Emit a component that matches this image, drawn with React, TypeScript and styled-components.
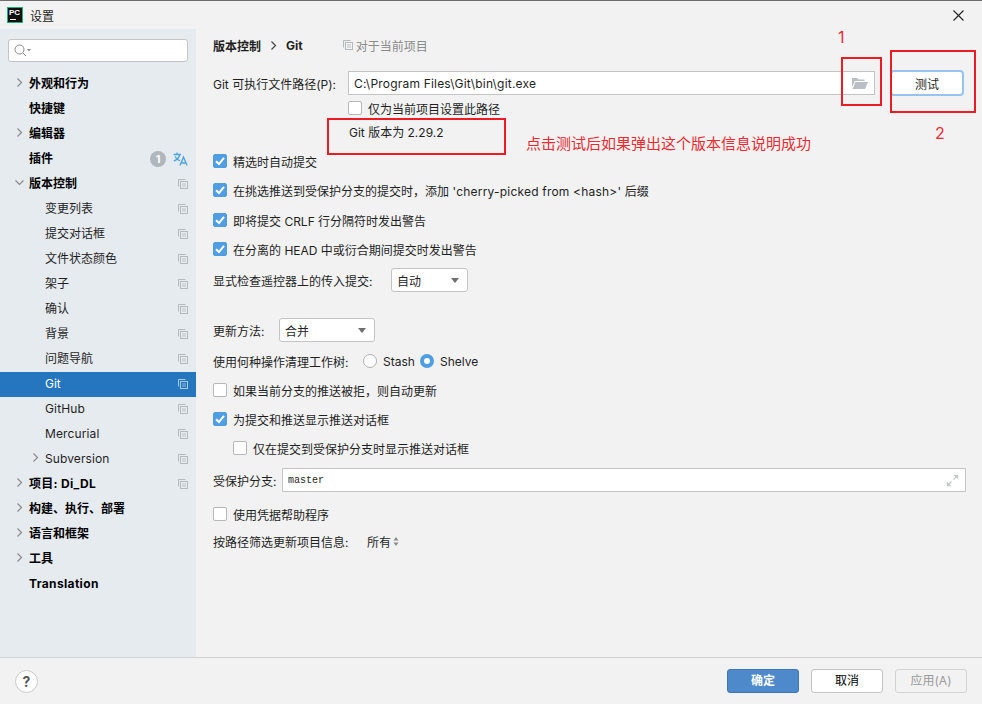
import React from "react";
import styled, { createGlobalStyle } from "styled-components";

const FONT = `Inter, "Noto Sans CJK SC", sans-serif`;

const Global = createGlobalStyle`
  html, body { margin: 0; padding: 0; background: #f2f2f2; }
  body { font-family: ${FONT}; font-size: 12px; color: #1f1f1f; }
  * { box-sizing: border-box; }
`;

const Dialog = styled.div`
  position: relative;
  width: 982px;
  height: 704px;
  overflow: hidden;
  background: #f2f2f2;
  border-top: 1px solid #6e6e6e;
  display: flex;
  flex-direction: column;
`;
const TitleBar = styled.div`
  height: 28px;
  flex: none;
  display: flex;
  align-items: center;
  padding: 0 18px 0 7px;
  gap: 7px;
  background: #f2f2f2;
`;
const Logo = styled.div`
  width: 16px;
  height: 16px;
  background: #111;
  border: 1px solid #1fb37a;
  color: #fff;
  font: bold 8px/9px "Liberation Sans", sans-serif;
  padding-left: 1px;
  position: relative;
  &::after {
    content: "";
    position: absolute;
    left: 2px;
    bottom: 2px;
    width: 6px;
    height: 1px;
    background: #fff;
  }
`;
const TitleText = styled.span`
  font-size: 12px;
  flex: 1;
`;
const Main = styled.div`
  flex: 1;
  display: flex;
  min-height: 0;
`;
const Sidebar = styled.div`
  width: 196px;
  flex: none;
  background: #e6ebf0;
  padding-top: 10px;
`;
const SearchBox = styled.div`
  margin: 0 8px 10px;
  width: 180px;
  height: 23px;
  border: 1px solid #c4c4c4;
  border-radius: 3px;
  background: #fff;
  display: flex;
  align-items: center;
  padding-left: 5px;
`;
const TreeRow = styled.div<{ $level: number; $selected?: boolean; $bold?: boolean }>`
  height: 25px;
  display: flex;
  align-items: center;
  padding-left: ${(p) => (p.$level === 0 ? 29 : 45)}px;
  padding-right: 8px;
  position: relative;
  font-weight: ${(p) => (p.$bold ? 700 : 400)};
  background: ${(p) => (p.$selected ? "#2675bf" : "transparent")};
  color: ${(p) => (p.$selected ? "#fff" : p.$bold ? "#000" : "#1f1f1f")};
`;
const TreeLabel = styled.span<{ $latin?: boolean; $spacing?: number }>`
  flex: 1;
  white-space: nowrap;
  margin-top: ${(p) => (p.$latin ? -2 : -4)}px;
  letter-spacing: ${(p) => p.$spacing ?? 0}px;
`;
const Arrow = styled.span<{ $level: number }>`
  position: absolute;
  left: ${(p) => (p.$level === 0 ? 14 : 30)}px;
  top: 5px;
  width: 11px;
  height: 11px;
  display: flex;
`;
const Badge = styled.span`
  width: 16px;
  height: 16px;
  border-radius: 50%;
  background: #afb6bc;
  color: #fff;
  font-size: 11px;
  font-weight: 700;
  line-height: 16px;
  text-align: center;
  margin: -2px 7px 0 0;
`;
const IconSlot = styled.span`
  display: flex;
  margin-top: -2px;
`;
const Content = styled.div`
  flex: 1;
  min-width: 0;
  padding: 7px 16px 0 17px;
  display: flex;
  flex-direction: column;
`;
const Row = styled.div<{ $h: number; $mt?: number; $indent?: number }>`
  height: ${(p) => p.$h}px;
  margin-top: ${(p) => p.$mt ?? 0}px;
  margin-left: ${(p) => p.$indent ?? 0}px;
  display: flex;
  align-items: center;
  white-space: nowrap;
  flex: none;
`;
const Crumb = styled.span`
  font-weight: 700;
  font-size: 12px;
  color: #1f1f1f;
`;
const CrumbSep = styled.span`
  margin: 0 7px;
  display: flex;
`;
const ProjectNote = styled.span`
  color: #8a8a8a;
  font-size: 12px;
  margin-left: 40px;
  display: flex;
  align-items: center;
  gap: 3px;
`;
const Label = styled.span<{ $w?: number }>`
  ${(p) => (p.$w ? `width: ${p.$w}px; flex: none;` : "")}
`;
const Latin = styled.span`
  letter-spacing: 0.2px;
`;
const TextField = styled.div<{ $w: number; $mono?: boolean }>`
  width: ${(p) => p.$w}px;
  height: 24px;
  flex: none;
  border: 1px solid #c4c4c4;
  background: #fff;
  display: flex;
  align-items: center;
  justify-content: space-between;
  padding: 0 6px 0 5px;
  font-family: ${(p) => (p.$mono ? `"Liberation Mono", monospace` : FONT)};
  font-size: ${(p) => (p.$mono ? "10px" : "12px")};
`;
const TestButton = styled.div`
  width: 74px;
  height: 26px;
  flex: none;
  margin-left: 15px;
  border: 2px solid #97c3ef;
  border-radius: 4px;
  background: #fff;
  display: flex;
  align-items: center;
  justify-content: center;
  font-size: 12px;
`;
const Box = styled.span<{ $checked?: boolean }>`
  width: 14px;
  height: 14px;
  flex: none;
  border-radius: 2px;
  border: 1px solid ${(p) => (p.$checked ? "#4f9ee3" : "#b8b8b8")};
  background: ${(p) => (p.$checked ? "#4f9ee3" : "#fff")};
  display: flex;
  align-items: center;
  justify-content: center;
  margin-right: 6px;
`;
const Select = styled.div<{ $w: number }>`
  width: ${(p) => p.$w}px;
  height: 24px;
  flex: none;
  border: 1px solid #c4c4c4;
  border-radius: 3px;
  background: #fff;
  display: flex;
  align-items: center;
  justify-content: space-between;
  padding: 0 8px 0 5px;
  &::after {
    content: "";
    border-left: 4px solid transparent;
    border-right: 4px solid transparent;
    border-top: 5px solid #6e6e6e;
  }
`;
const Radio = styled.span<{ $on?: boolean }>`
  width: 14px;
  height: 14px;
  flex: none;
  border-radius: 50%;
  background: #fff;
  border: ${(p) => (p.$on ? "4.5px solid #4f9ee3" : "1px solid #b0b0b0")};
  margin-right: 6px;
`;
const Footer = styled.div`
  height: 47px;
  flex: none;
  border-top: 1px solid #d1d1d1;
  display: flex;
  align-items: center;
  padding: 0 15px;
`;
const Help = styled.div`
  width: 23px;
  height: 23px;
  border-radius: 50%;
  border: 1px solid #c9c9c9;
  background: #fff;
  color: #555;
  font-weight: 700;
  font-size: 14px;
  display: flex;
  align-items: center;
  justify-content: center;
`;
const FootButtons = styled.div`
  margin-left: auto;
  display: flex;
  gap: 12px;
`;
const FootButton = styled.div<{ $kind: "primary" | "normal" | "disabled" }>`
  width: 72px;
  height: 24px;
  border-radius: 3px;
  display: flex;
  align-items: center;
  justify-content: center;
  font-size: 12px;
  line-height: 20px;
  padding-bottom: 1px;
  border: 1px solid ${(p) => (p.$kind === "primary" ? "#3f78b8" : p.$kind === "normal" ? "#c4c4c4" : "#d2d2d2")};
  background: ${(p) => (p.$kind === "primary" ? "#4e8acb" : p.$kind === "normal" ? "#fff" : "#f2f2f2")};
  color: ${(p) => (p.$kind === "primary" ? "#fff" : p.$kind === "normal" ? "#000" : "#9a9a9a")};
  font-weight: ${(p) => (p.$kind === "primary" ? 700 : 400)};
`;
const RedRect = styled.div<{ $l: number; $t: number; $w: number; $h: number }>`
  position: absolute;
  left: ${(p) => p.$l}px;
  top: ${(p) => p.$t}px;
  width: ${(p) => p.$w}px;
  height: ${(p) => p.$h}px;
  border: 2px solid #ed1c24;
`;
const RedText = styled.div<{ $l: number; $t: number; $size: number }>`
  position: absolute;
  left: ${(p) => p.$l}px;
  top: ${(p) => p.$t}px;
  font-size: ${(p) => p.$size}px;
  line-height: 20px;
  color: #ed2a32;
  white-space: nowrap;
`;

const Chevron = ({ down, color = "#8c8c8c" }: { down?: boolean; color?: string }) => (
  <svg width="11" height="11" viewBox="0 0 11 11" fill="none" stroke={color} strokeWidth="1.2">
    {down ? <path d="M1.5 3.5 L5.5 7.5 L9.5 3.5" /> : <path d="M3.5 1.5 L7.5 5.5 L3.5 9.5" />}
  </svg>
);
const CopyIcon = ({ color = "#b4b9bd" }: { color?: string }) => (
  <svg width="10" height="10" viewBox="0 0 10 10" fill="none" stroke={color} strokeWidth="1">
    <path d="M0.5 7.5 V0.5 H7.5" />
    <rect x="2.5" y="2.5" width="7" height="7" />
    <path d="M4 5 H8 M4 7 H8" strokeWidth="0.8" />
  </svg>
);
const Check = () => (
  <svg width="12" height="12" viewBox="0 0 12 12" fill="none" stroke="#fff" strokeWidth="2">
    <path d="M2 6.2 L5 9 L10 2.8" />
  </svg>
);
const SearchIcon = () => (
  <svg width="18" height="13" viewBox="0 0 18 13" fill="none" stroke="#8a8a8a" strokeWidth="1">
    <circle cx="5.5" cy="5.5" r="4.5" />
    <path d="M9 9 L12 12" />
    <path d="M13 5 H17 L15 7.5 Z" fill="#8a8a8a" stroke="none" />
  </svg>
);
const TranslateIcon = () => (
  <svg width="15" height="14" viewBox="0 0 15 14" fill="none" stroke="#4ea6dc" strokeWidth="1.4">
    <path d="M0.5 2.5 H8 M4 0.5 V2.5 M6.8 2.5 C6 6 3.5 8 0.8 9 M2 4.5 C3 6.5 5 8 7 8.6" />
    <path d="M7 13.5 L10.5 5 L14 13.5 M8.2 11 H12.8" />
  </svg>
);
const FolderIcon = () => (
  <svg width="16" height="12" viewBox="0 0 16 12" fill="#b9bfc4">
    <path d="M0 1 H5 L6.5 2.5 H12.5 V4 H3 L0 10 Z" />
    <path d="M3.5 5 H16 L13 12 H0.5 Z" />
  </svg>
);
const ExpandIcon = () => (
  <svg width="13" height="13" viewBox="0 0 13 13" fill="#c4c8cc" stroke="#c4c8cc">
    <path d="M8 1 H12 V5 Z" strokeWidth="0.5" />
    <path d="M1 8 V12 H5 Z" strokeWidth="0.5" />
    <path d="M10 3 L7.5 5.5 M3 10 L5.5 7.5" strokeWidth="1.2" fill="none" />
  </svg>
);
const CloseIcon = () => (
  <svg width="11" height="11" viewBox="0 0 11 11" stroke="#222" strokeWidth="1.1">
    <path d="M0.5 0.5 L10.5 10.5 M10.5 0.5 L0.5 10.5" />
  </svg>
);
const UpDownIcon = styled.svg`
  margin-left: 2px;
`;
const UpDown = () => (
  <UpDownIcon width="6" height="9" viewBox="0 0 6 9" fill="#8a8a8a">
    <path d="M3 0 L5.5 3.5 H0.5 Z M3 9 L0.5 5.5 H5.5 Z" />
  </UpDownIcon>
);

type Item = {
  label: string;
  level: number;
  bold?: boolean;
  arrow?: "right" | "down";
  copy?: boolean;
  selected?: boolean;
  plugin?: boolean;
  latin?: boolean;
  spacing?: number;
};
const tree: Item[] = [
  { label: "外观和行为", level: 0, bold: true, arrow: "right" },
  { label: "快捷键", level: 0, bold: true },
  { label: "编辑器", level: 0, bold: true, arrow: "right" },
  { label: "插件", level: 0, bold: true, plugin: true },
  { label: "版本控制", level: 0, bold: true, arrow: "down", copy: true },
  { label: "变更列表", level: 1, copy: true },
  { label: "提交对话框", level: 1, copy: true },
  { label: "文件状态颜色", level: 1, copy: true },
  { label: "架子", level: 1, copy: true },
  { label: "确认", level: 1, copy: true },
  { label: "背景", level: 1, copy: true },
  { label: "问题导航", level: 1, copy: true },
  { label: "Git", level: 1, copy: true, selected: true, latin: true },
  { label: "GitHub", level: 1, copy: true, latin: true, spacing: 0.15 },
  { label: "Mercurial", level: 1, copy: true, latin: true, spacing: 0.12 },
  { label: "Subversion", level: 1, copy: true, arrow: "right", latin: true, spacing: 0.1 },
  { label: "项目: Di_DL", level: 0, bold: true, arrow: "right", copy: true, spacing: 0.3 },
  { label: "构建、执行、部署", level: 0, bold: true, arrow: "right" },
  { label: "语言和框架", level: 0, bold: true, arrow: "right" },
  { label: "工具", level: 0, bold: true, arrow: "right" },
  { label: "Translation", level: 0, bold: true, latin: true, spacing: 0.35 },
];

const Checkbox = ({ checked, children }: { checked?: boolean; children: React.ReactNode }) => (
  <>
    <Box $checked={checked}>{checked && <Check />}</Box>
    <span>{children}</span>
  </>
);

export default function App() {
  return (
    <Dialog>
      <Global />
      <TitleBar>
        <Logo>PC</Logo>
        <TitleText>设置</TitleText>
        <CloseIcon />
      </TitleBar>
      <Main>
        <Sidebar>
          <SearchBox>
            <SearchIcon />
          </SearchBox>
          {tree.map((t) => (
            <TreeRow key={t.label} $level={t.level} $bold={t.bold} $selected={t.selected}>
              {t.arrow && (
                <Arrow $level={t.level}>
                  <Chevron down={t.arrow === "down"} />
                </Arrow>
              )}
              <TreeLabel $latin={t.latin} $spacing={t.spacing}>
                {t.label}
              </TreeLabel>
              {t.plugin && (
                <>
                  <Badge>1</Badge>
                  <IconSlot>
                    <TranslateIcon />
                  </IconSlot>
                </>
              )}
              {t.copy && (
                <IconSlot>
                  <CopyIcon color={t.selected ? "#a9cbea" : undefined} />
                </IconSlot>
              )}
            </TreeRow>
          ))}
        </Sidebar>
        <Content>
          <Row $h={18}>
            <Crumb>版本控制</Crumb>
            <CrumbSep>
              <Chevron color="#444" />
            </CrumbSep>
            <Crumb>Git</Crumb>
            <ProjectNote>
              <CopyIcon />
              对于当前项目
            </ProjectNote>
          </Row>
          <Row $h={26} $mt={16}>
            <Label $w={135}>Git 可执行文件路径(P):</Label>
            <TextField $w={527}>
              <Latin>C:\Program Files\Git\bin\git.exe</Latin>
              <FolderIcon />
            </TextField>
            <TestButton>测试</TestButton>
          </Row>
          <Row $h={20} $mt={2} $indent={135}>
            <Checkbox>仅为当前项目设置此路径</Checkbox>
          </Row>
          <Row $h={20} $mt={3} $indent={136}>
            Git 版本为 2.29.2
          </Row>
          <Row $h={20} $mt={10}>
            <Checkbox checked>精选时自动提交</Checkbox>
          </Row>
          <Row $h={20} $mt={9}>
            <Checkbox checked>
              在挑选推送到受保护分支的提交时，添加 <Latin>'cherry-picked from &lt;hash&gt;'</Latin> 后缀
            </Checkbox>
          </Row>
          <Row $h={20} $mt={10}>
            <Checkbox checked>即将提交 CRLF 行分隔符时发出警告</Checkbox>
          </Row>
          <Row $h={20} $mt={9}>
            <Checkbox checked>在分离的 HEAD 中或衍合期间提交时发出警告</Checkbox>
          </Row>
          <Row $h={24} $mt={9}>
            <Label $w={178}>显式检查遥控器上的传入提交:</Label>
            <Select $w={77}>自动</Select>
          </Row>
          <Row $h={24} $mt={26}>
            <Label $w={66}>更新方法:</Label>
            <Select $w={96}>合并</Select>
          </Row>
          <Row $h={20} $mt={9}>
            <Label $w={150}>使用何种操作清理工作树:</Label>
            <Radio />
            <Label $w={37}>Stash</Label>
            <Radio $on />
            <span>Shelve</span>
          </Row>
          <Row $h={20} $mt={9}>
            <Checkbox>如果当前分支的推送被拒，则自动更新</Checkbox>
          </Row>
          <Row $h={20} $mt={9}>
            <Checkbox checked>为提交和推送显示推送对话框</Checkbox>
          </Row>
          <Row $h={20} $mt={9} $indent={20}>
            <Checkbox>仅在提交到受保护分支时显示推送对话框</Checkbox>
          </Row>
          <Row $h={24} $mt={10}>
            <Label $w={69}>受保护分支:</Label>
            <TextField $w={684} $mono>
              master
              <ExpandIcon />
            </TextField>
          </Row>
          <Row $h={20} $mt={12}>
            <Checkbox>使用凭据帮助程序</Checkbox>
          </Row>
          <Row $h={20} $mt={7}>
            <Label $w={154}>按路径筛选更新项目信息:</Label>
            所有
            <UpDown />
          </Row>
        </Content>
      </Main>
      <Footer>
        <Help>?</Help>
        <FootButtons>
          <FootButton $kind="primary">确定</FootButton>
          <FootButton $kind="normal">取消</FootButton>
          <FootButton $kind="disabled">应用(A)</FootButton>
        </FootButtons>
      </Footer>
      <RedRect $l={841} $t={56} $w={41} $h={49} />
      <RedRect $l={890} $t={49} $w={86} $h={63} />
      <RedRect $l={327} $t={117} $w={179} $h={37} />
      <RedText $l={838} $t={26} $size={16}>1</RedText>
      <RedText $l={935} $t={122} $size={16}>2</RedText>
      <RedText $l={526} $t={133} $size={15}>点击测试后如果弹出这个版本信息说明成功</RedText>
    </Dialog>
  );
}
